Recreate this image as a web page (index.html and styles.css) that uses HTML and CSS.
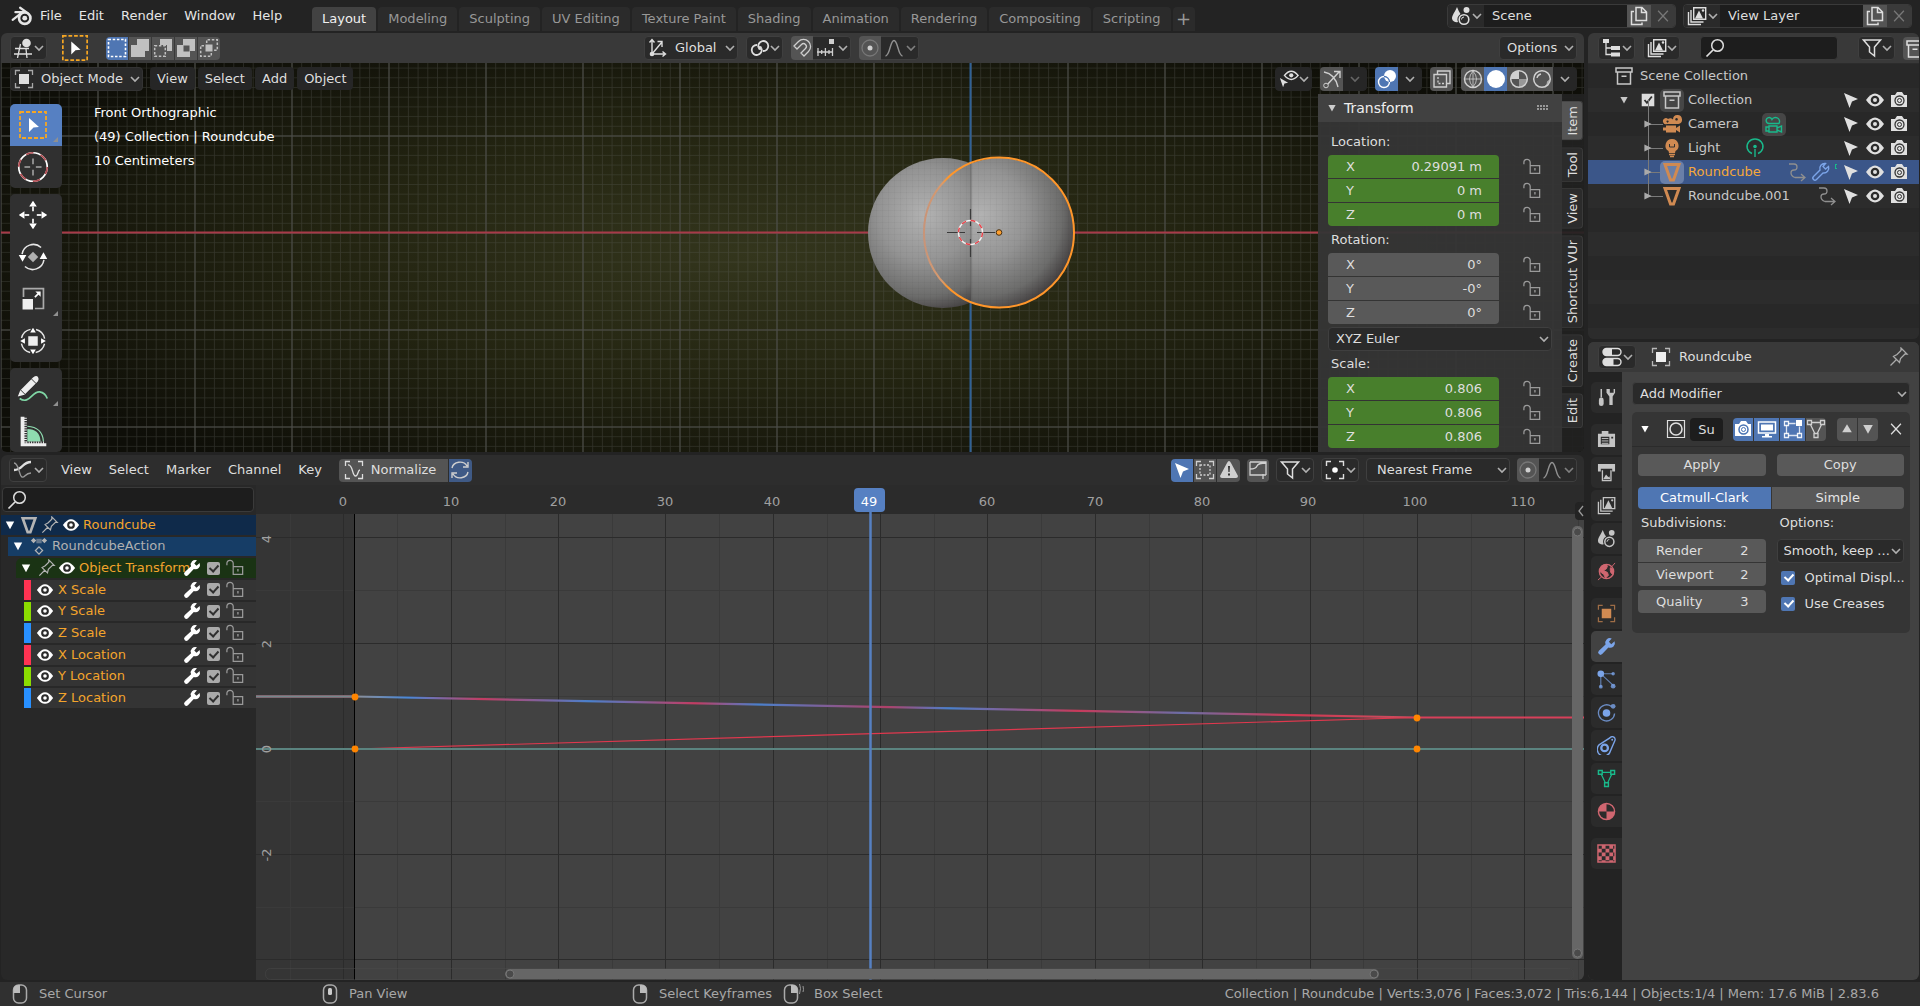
FILE: index.html
```html
<!DOCTYPE html>
<html lang="en">
<head>
<meta charset="utf-8">
<title>Blender</title>
<link rel="stylesheet" href="styles.css">
</head>
<body>
<svg class="defs" aria-hidden="true">
  <defs>
    <symbol id="chev" viewBox="0 0 10 10"><path d="M1 3l4 4 4-4" fill="none" stroke="currentColor" stroke-width="1.6"/></symbol>
    <symbol id="logo" viewBox="0 0 20 20"><path d="M8.300 2.500L15.500 7.600M1.500 13.500L10.500 6.500H4" fill="none" stroke="currentColor" stroke-width="2" stroke-linecap="round"/><circle cx="12.500" cy="12" r="5.200" fill="none" stroke="currentColor" stroke-width="2.400"/><circle cx="12.500" cy="12" r="2.200" fill="currentColor"/></symbol>
    <symbol id="arrow" viewBox="0 0 20 20"><path d="M3 3l14 6-6 2.500L8.500 18z" fill="currentColor"/></symbol>
    <symbol id="eye" viewBox="0 0 20 20"><path d="M1 10q9-13 18 0q-9 13-18 0z" fill="currentColor"/><circle cx="10" cy="10" r="4.300" fill="#2b2b2b"/><circle cx="10" cy="10" r="2" fill="currentColor"/></symbol>
    <symbol id="cam" viewBox="0 0 20 20"><path d="M2 5h4l2-3h5l2 3h3v12H2z" fill="currentColor"/><circle cx="10.500" cy="10.500" r="4.500" fill="none" stroke="#333" stroke-width="1.300"/><circle cx="10.500" cy="10.500" r="2" fill="none" stroke="#333" stroke-width="1"/></symbol>
    <symbol id="camb" viewBox="0 0 20 20"><path d="M2 5h4l2-3h5l2 3h3v12H2z" fill="currentColor"/><circle cx="10.500" cy="10.500" r="4.500" fill="none" stroke="#4772b3" stroke-width="1.500"/><circle cx="10.500" cy="10.500" r="2" fill="none" stroke="#4772b3" stroke-width="1"/></symbol>
    <symbol id="lock" viewBox="0 0 20 20"><path d="M1 7V5a3.500 3.500 0 0 1 7 0V8.500M8 8.500h10.500v8.500H8z" fill="none" stroke="currentColor" stroke-width="1.400"/><path d="M12.500 11h1.500v3h-1.500z" fill="currentColor"/></symbol>
    <symbol id="pin" viewBox="0 0 20 20"><path d="M1.500 18.500l6-6M4.500 9.500l6 6 1-4 4.500-4.500 2 0-6-6 0 2.500-4 4z" fill="none" stroke="currentColor" stroke-width="1.300"/></symbol>
    <symbol id="wrench" viewBox="0 0 20 20"><path d="M18.500 4.500l-3.500 3-2.500-2.500 3-3.500a5 5 0 0 0-6.500 6.500l-7 6.500a2.300 2.300 0 0 0 3.500 3.500l6.500-7a5 5 0 0 0 6.500-6.500z" fill="currentColor"/></symbol>
    <symbol id="wrencho" viewBox="0 0 20 20"><path d="M17.500 4.500l-3 2.500-2.500-2.500 2.500-3a5 5 0 0 0-5.500 6.500l-6.500 6.500a2 2 0 0 0 3 3l6.500-6.500a5 5 0 0 0 5.500-6.500z" fill="none" stroke="currentColor" stroke-width="1.400"/></symbol>
    <symbol id="search" viewBox="0 0 20 20"><circle cx="12.500" cy="7.500" r="5.800" fill="none" stroke="currentColor" stroke-width="1.500"/><path d="M8 12l-6.500 6.500" stroke="currentColor" stroke-width="1.700"/></symbol>
    <symbol id="funnel" viewBox="0 0 20 20"><path d="M1.500 2h17l-6 7v9l-5-4V9z" fill="none" stroke="currentColor" stroke-width="1.500"/></symbol>
    <symbol id="copy" viewBox="0 0 20 20"><path d="M7 1.500h6l4.500 4.500v8.500H7zM12.500 1.500V6.500h5M5 5.500H2.500v13H13v-2" fill="none" stroke="currentColor" stroke-width="1.500"/></symbol>
    <symbol id="x" viewBox="0 0 20 20"><path d="M3 2.500l14 15M17 2.500l-14 15" stroke="currentColor" stroke-width="1.800"/></symbol>
    <symbol id="scene" viewBox="0 0 20 20"><path d="M6 1C4 6 1 9 1 12.500a4.500 4 0 0 0 6 3.500q-2-5 2.500-8Q7.500 5 6 1z" fill="currentColor"/><circle cx="15.500" cy="4" r="3" fill="currentColor"/><circle cx="13" cy="13.500" r="4.800" fill="none" stroke="currentColor" stroke-width="1.600"/><path d="M10.500 13.500a2.500 2.500 0 0 1 2.500-2.500" fill="none" stroke="currentColor"/></symbol>
    <symbol id="layers" viewBox="0 0 20 20"><path d="M1.500 6v12.500H14M4 4v12h12.500" fill="none" stroke="currentColor" stroke-width="1.400"/><path d="M6.700 1.700h12v11.600h-12z" fill="none" stroke="currentColor" stroke-width="1.400"/><path d="M8 12.500l4-8 4 8z" fill="currentColor"/><circle cx="16" cy="4.500" r="1.200" fill="currentColor"/></symbol>
    <symbol id="ed3d" viewBox="0 0 20 20"><path d="M1 10.500h14M0 16h18M6.500 6L3.500 20M12 11l1 9" fill="none" stroke="currentColor" stroke-width="1.300"/><circle cx="12.500" cy="5" r="4.300" fill="currentColor"/></symbol>
    <symbol id="edgraph" viewBox="0 0 20 20"><path d="M1 10c9 0 8-8 17-8" fill="none" stroke="currentColor" stroke-width="2.400"/><path d="M1 3c5 0 5 13 8 14s3-4 9-4" fill="none" stroke="#999" stroke-width="1.400"/></symbol>
    <symbol id="edout" viewBox="0 0 20 20"><path d="M1 1h6v4H1zM9 8h9v4H9zM9 14.500h9v4H9z" fill="currentColor"/><path d="M4 5v11.500h5M4 10h5" fill="none" stroke="currentColor" stroke-width="1.300"/></symbol>
    <symbol id="edprop" viewBox="0 0 20 20"><rect x="1" y="1.500" width="18" height="7" rx="3.500" fill="none" stroke="currentColor" stroke-width="1.400"/><path d="M4.500 1.500H10v7H4.500a3.500 3.500 0 0 1 0-7z" fill="currentColor"/><rect x="1" y="11.500" width="18" height="7" rx="3.500" fill="none" stroke="currentColor" stroke-width="1.400"/><path d="M4.500 11.500h7v7h-7a3.500 3.500 0 0 1 0-7z" fill="currentColor"/></symbol>
    <symbol id="tsel" viewBox="0 0 30 30"><path d="M2 2h26v26H2z" fill="none" stroke="#f5a623" stroke-width="1.800" stroke-dasharray="4 2"/><path d="M11 8l10 9-5.500.5L11 22z" fill="#fff"/></symbol>
    <symbol id="m1" viewBox="0 0 20 20"><path d="M1.500 1.500h17v17h-17z" fill="none" stroke="currentColor" stroke-width="1.600" stroke-dasharray="2.500 1.700"/></symbol>
    <symbol id="m2" viewBox="0 0 20 20"><path d="M7 1h12v12h-4v6H1V7h6z" fill="currentColor"/></symbol>
    <symbol id="m3" viewBox="0 0 20 20"><path d="M7 1h12v12h-5V7H7z" fill="currentColor"/><path d="M1.700 7.700h10.600v10.600H1.700z" fill="none" stroke="currentColor" stroke-width="1.500" stroke-dasharray="2.500 1.700"/></symbol>
    <symbol id="m4" viewBox="0 0 20 20"><path fill-rule="evenodd" d="M7 1h12v12h-5v6H1V7h6zM7.500 7.500v6h6v-6z" fill="currentColor"/></symbol>
    <symbol id="m5" viewBox="0 0 20 20"><path d="M7.700 5V1.700h10.600v10.600H15M5 7.700H1.700v10.600h10.600V15" fill="none" stroke="currentColor" stroke-width="1.500" stroke-dasharray="2.500 1.700"/><path d="M6.500 6.500h7v7h-7z" fill="currentColor"/></symbol>
    <symbol id="axes" viewBox="0 0 20 20"><path d="M4 2v14h13M1.500 4.500L4 1.500l2.500 3M14.500 13.500l3 2.500-3 2.500M4 16L14 4M9.500 3.500H14V9" fill="none" stroke="currentColor" stroke-width="1.400"/><circle cx="4" cy="16" r="2.300" fill="currentColor"/></symbol>
    <symbol id="pivot" viewBox="0 0 20 20"><path d="M8.500 9.500a5 5 0 1 1 4.500 3.500M11.500 10.500a5 5 0 1 1-4.500-3.500" fill="none" stroke="currentColor" stroke-width="1.800"/><circle cx="10" cy="10" r="2" fill="currentColor"/></symbol>
    <symbol id="magnet" viewBox="0 0 20 20"><path d="M2 8l4.500-4.500a7 7 0 0 1 10 10L12 18l-3-3 4.500-4.500a2.600 2.600 0 0 0-4-4L5 11z" fill="none" stroke="currentColor" stroke-width="1.300"/></symbol>
    <symbol id="snap" viewBox="0 0 20 20"><path d="M1 14h16M2 10v8M5.700 12v4M9.400 10v8M13 12v4M16.500 10v8" stroke="currentColor" stroke-width="1.300"/><path d="M13 1h5v5h-5z" fill="currentColor"/></symbol>
    <symbol id="prop" viewBox="0 0 20 20"><circle cx="10" cy="10" r="8" fill="none" stroke="#777" stroke-width="1.300"/><circle cx="10" cy="10" r="2.500" fill="currentColor"/></symbol>
    <symbol id="bell" viewBox="0 0 20 20"><path d="M1.500 18C6 18 6 2.500 10 2.500S14 18 18.500 18" fill="none" stroke="currentColor" stroke-width="1.500"/></symbol>
    <symbol id="objmode" viewBox="0 0 20 20"><path d="M1.500 6V1.500H6M14 1.500h4.500V6M18.500 14v4.500H14M6 18.500H1.500V14" fill="none" stroke="currentColor" stroke-width="1.300" opacity=".7"/><path d="M5 5h10v10H5z" fill="currentColor"/></symbol>
    <symbol id="eyecur" viewBox="0 0 22 20"><path d="M6 6q7.500-9 15 0q-7.500 9-15 0z" fill="none" stroke="currentColor" stroke-width="1.600"/><circle cx="13.500" cy="6" r="2.300" fill="currentColor"/><path d="M1 9l9 5-4 1-1.500 4z" fill="currentColor"/></symbol>
    <symbol id="gizmo" viewBox="0 0 20 20"><path d="M2 3q11 2 14 15M4 17L17 3M12 2.500h6V9" fill="none" stroke="currentColor" stroke-width="1.400"/><circle cx="4" cy="16.500" r="2.300" fill="#545454" stroke="currentColor"/></symbol>
    <symbol id="overlay" viewBox="0 0 20 20"><circle cx="13" cy="7" r="6" fill="currentColor"/><circle cx="7" cy="13" r="5.500" fill="none" stroke="currentColor" stroke-width="1.400"/><path d="M7 7.500a5.500 5.500 0 0 1 5.500 5.500" fill="none" stroke="#4772b3" stroke-width="1.300"/></symbol>
    <symbol id="xray" viewBox="0 0 20 20"><path d="M2 5.500h12.500V18H2zM5.500 5V2H18v12.500h-3" fill="none" stroke="currentColor" stroke-width="1.400"/><path d="M6 8v6.500h6" fill="none" stroke="currentColor" stroke-width="1.300" stroke-dasharray="2 1.500"/></symbol>
    <symbol id="wire" viewBox="0 0 20 20"><path d="M10 2v16M2 10h16M10 2q-7 8 0 16M10 2q7 8 0 16" fill="none" stroke="currentColor" stroke-width=".8"/><circle cx="10" cy="10" r="8.500" fill="none" stroke="currentColor" stroke-width="1.500"/></symbol>
    <symbol id="solid" viewBox="0 0 20 20"><circle cx="10" cy="10" r="9" fill="currentColor"/></symbol>
    <symbol id="matp" viewBox="0 0 20 20"><circle cx="10" cy="10" r="8.300" fill="none" stroke="currentColor" stroke-width="1.500"/><path d="M10 1.500V10H1.500A8.500 8.500 0 0 1 10 1.500z" fill="currentColor"/><path d="M10 10h8.500A8.500 8.500 0 0 1 10 18.500z" fill="currentColor" opacity=".55"/></symbol>
    <symbol id="rend" viewBox="0 0 20 20"><circle cx="10" cy="10" r="8.300" fill="none" stroke="currentColor" stroke-width="1.500"/><path d="M18 10a8 8 0 0 1-8 8q5-1 5-5.500z" fill="currentColor" opacity=".7"/><path d="M5 9a5 5 0 0 1 4-4" fill="none" stroke="currentColor" stroke-width="1.300"/></symbol>
    <symbol id="t3cur" viewBox="0 0 40 40"><circle cx="20" cy="20" r="15" fill="none" stroke="#fff" stroke-width="1.800"/><circle cx="20" cy="20" r="15" fill="none" stroke="#b04a50" stroke-width="1.800" stroke-dasharray="7.850 7.850"/><path d="M20 11v6M20 23v6M11 20h6M23 20h6" stroke="#a8a8a8" stroke-width="1.600"/></symbol>
    <symbol id="tmove" viewBox="0 0 40 40"><path d="M20 5l4 6h-8zM20 35l4-6h-8zM5 20l6-4v8zM35 20l-6-4v8z" fill="#fff"/><path d="M20 11v5M20 24v5M11 20h5M24 20h5" stroke="#e6e6e6" stroke-width="2"/></symbol>
    <symbol id="trot" viewBox="0 0 40 40"><path d="M8.500 17a12 12 0 0 1 20-7M31.500 23a12 12 0 0 1-20 7" fill="none" stroke="#e6e6e6" stroke-width="1.600"/><path d="M9 25l-4-7h8zM31 15l-4 7h8z" fill="#fff"/><path d="M20 14.500l5.500 5.500-5.500 5.500-5.500-5.500z" fill="#b0b0b0"/></symbol>
    <symbol id="tscale" viewBox="0 0 40 40"><path d="M10 18V9h21v21h-9" fill="none" stroke="#aaa" stroke-width="1.800"/><path d="M9 20h11v11H9z" fill="#eee"/><path d="M22 18l5-5" stroke="#fff" stroke-width="1.800"/><path d="M28 12v5.500L22.500 12z" fill="#fff"/></symbol>
    <symbol id="ttrans" viewBox="0 0 40 40"><circle cx="20" cy="20" r="12.500" fill="none" stroke="#e6e6e6" stroke-width="1.500" stroke-dasharray="13.600 6" stroke-dashoffset="-3"/><path d="M15 15h10v10H15z" fill="#eee"/><path d="M20 6l3 5h-6zM20 34l3-5h-6zM6.500 20l5-3v6zM33.500 20l-5-3v6z" fill="#fff"/></symbol>
    <symbol id="tann" viewBox="0 0 40 40"><path d="M6 30c10 7 13-8 21-7q6 1 8 7" fill="none" stroke="#7fd6a4" stroke-width="1.800"/><path d="M4 28l2.500-6.500L20 8q2-2.500 4.500-1.500Q27 9 25 12L11 26z" fill="#eee"/><path d="M7 21l5 5M18.500 9.500l5 5" stroke="#303030" stroke-width="1"/></symbol>
    <symbol id="tmeas" viewBox="0 0 40 40"><path d="M14 18q13 0 14 13H14z" fill="#8fdcb0"/><path d="M14 15q16 1 17 16" fill="none" stroke="#8fdcb0" stroke-width="1.300"/><path d="M7 5h4v31H7zM7 33h27v3H7z" fill="#eee"/><path d="M12 6v28" stroke="#eee" stroke-width="3" stroke-dasharray="1 1.500"/><path d="M13 32.500h20" stroke="#eee" stroke-width="3" stroke-dasharray="1 1.500"/></symbol>
    <symbol id="norm" viewBox="0 0 20 20"><path d="M1.500 6V1.500H6M14 1.500h4.500V6M18.500 14v4.500H14M6 18.500H1.500V14M4 5c5-1 4 11 7.500 11 3 0 2-6 4.500-6" fill="none" stroke="currentColor" stroke-width="1.300"/></symbol>
    <symbol id="refresh" viewBox="0 0 20 20"><path d="M2 8a8 7 0 0 1 15-2M18 2v5h-5M18 12a8 7 0 0 1-15 2M2 18v-5h5" fill="none" stroke="currentColor" stroke-width="1.400"/></symbol>
    <symbol id="hid" viewBox="0 0 20 20"><path d="M1.500 6V1.500H6M14 1.500h4.500V6M18.500 14v4.500H14M6 18.500H1.500V14" fill="none" stroke="currentColor" stroke-width="1.300"/><path d="M5 5h10v10H5z" fill="none" stroke="currentColor" stroke-width="1.300" stroke-dasharray="2 1.500"/></symbol>
    <symbol id="warn" viewBox="0 0 20 20"><path d="M10 1q1 0 2 2l7 13q0 2-2 2H3q-2 0-2-2L8 3q1-2 2-2z" fill="currentColor"/><path d="M9 6h2l-.4 6H9.400zM9 13.500h2v2H9z" fill="#333"/></symbol>
    <symbol id="ghost" viewBox="0 0 20 20"><path d="M2 2h16v13M2 2v13h16M2 15V9q6 0 7-3t9-3M15 19v-5" fill="none" stroke="currentColor" stroke-width="1.300"/></symbol>
    <symbol id="pivg" viewBox="0 0 20 20"><path d="M1.500 6V1.500H6M14 1.500h4.500V6M18.500 14v4.500H14M6 18.500H1.500V14" fill="none" stroke="currentColor" stroke-width="1.400"/><circle cx="10" cy="10" r="2.800" fill="#fff"/></symbol>
    <symbol id="coll" viewBox="0 0 20 20"><path d="M2 2h16v4H2zM3.500 6v12h13V6" fill="none" stroke="currentColor" stroke-width="1.500"/><path d="M7.500 9.500h5v1.500h-5z" fill="currentColor"/></symbol>
    <symbol id="check" viewBox="0 0 20 20"><path d="M1 1h18v18H1z" fill="currentColor"/><path d="M5 10l3.500 4L15.500 5" fill="none" stroke="#303030" stroke-width="2.600"/></symbol>
    <symbol id="movie" viewBox="0 0 20 20"><path fill-rule="evenodd" d="M6 5a4 4 0 0 1 5 .5A4.500 4.500 0 1 1 16.500 10H5a3 3 0 1 1 1-5zM5.500 6.500a1 1 0 1 0 .1 0M14.500 4a1.300 1.300 0 1 0 .1 0M4 11.500h10v2.500l4-2.500v7l-4-2.500v2.500H4v-2H1v-3h3z" fill="currentColor"/></symbol>
    <symbol id="movieo" viewBox="0 0 20 20"><path d="M5 9.500a3 3 0 1 1 3-4A4 4 0 1 1 15 9.500zM5 12h8v6H5zM13 14l4.500-2v6L13 16M5 13H2v4h3" fill="none" stroke="currentColor" stroke-width="1.400"/></symbol>
    <symbol id="bulb" viewBox="0 0 20 20"><path d="M10 1a6.500 6.500 0 0 1 3.500 12l-.5 2H7l-.5-2A6.500 6.500 0 0 1 10 1z" fill="currentColor"/><path d="M7 16.500h6M8 18.500h4" stroke="currentColor" stroke-width="1.300" fill="none"/><path d="M7.500 6v3h5V6" stroke="#333" fill="none"/></symbol>
    <symbol id="bulbo" viewBox="0 0 20 20"><path d="M7 15.500a8 7.500 0 1 1 6 0M10 11v8" fill="none" stroke="currentColor" stroke-width="1.400"/><circle cx="10" cy="8.500" r="1.800" fill="currentColor"/></symbol>
    <symbol id="mesh" viewBox="0 0 20 20"><path d="M3 2.500h14L11.500 18h-3z" fill="none" stroke="currentColor" stroke-width="3"/></symbol>
    <symbol id="anim" viewBox="0 0 20 20"><path d="M2 2h5q3 0 3 3t-3 3-3 3 4 4.500h9M14 12l4 3.500-4 3.500" fill="none" stroke="currentColor" stroke-width="1.300"/></symbol>
    <symbol id="action" viewBox="0 0 20 20"><path d="M1 4l3-3 3 3-3 3zM13 4l3-3 3 3-3 3z" fill="currentColor"/><path d="M7 2h6v5H7z" fill="currentColor" opacity=".5"/><path d="M10 11l4 4-4 4-4-4z" fill="none" stroke="currentColor" stroke-width="1.400"/></symbol>
    <symbol id="ptool" viewBox="0 0 20 20"><path d="M4.500 1v9" stroke="currentColor" stroke-width="1.600"/><rect x="2" y="10" width="5" height="9" rx="2.500" fill="currentColor"/><path d="M10 1v4l3 4v9h3.500V9L19 5V1h-1.500v4h-4V1z" fill="currentColor"/></symbol>
    <symbol id="prender" viewBox="0 0 20 20"><path fill-rule="evenodd" d="M5 4V1h7v3h7v14H1V4zM4 7v8h9V7zM15 7v2h2V7z" fill="currentColor"/><path d="M5 9h7M5 11.500h7M5 14h7" stroke="currentColor"/></symbol>
    <symbol id="pout" viewBox="0 0 20 20"><path d="M1 1h18v8h-3V6H4v3H1z" fill="currentColor"/><path d="M5.700 7.500v11h9v-11" fill="none" stroke="currentColor" stroke-width="1.400"/><path d="M6.500 17l3-5 2.500 3 1-1 1 3z" fill="currentColor"/></symbol>
    <symbol id="pworld" viewBox="0 0 20 20"><circle cx="10" cy="10" r="7.500" fill="none" stroke="currentColor" stroke-width="1.500"/><path d="M5 4q4-2 6 0l-1 3-3 2 4 2 1 3-3 3-2-4-4-3q0-4 2-6zM14 6l3 2v5q-3-1-3-4zM1 19l4-3.500M19 1l-3.500 4" fill="currentColor" stroke="currentColor"/></symbol>
    <symbol id="ppart" viewBox="0 0 20 20"><path d="M4 4h13M4 4v14M4 4l14 13" stroke="currentColor" stroke-width="1.200" opacity=".7"/><circle cx="4" cy="4" r="3.500" fill="currentColor"/><circle cx="17" cy="4" r="1.800" fill="currentColor" opacity=".8"/><circle cx="4" cy="17.500" r="2" fill="currentColor" opacity=".8"/><circle cx="17" cy="17" r="2.500" fill="currentColor" opacity=".8"/></symbol>
    <symbol id="pphys" viewBox="0 0 20 20"><path d="M15 3.500A8.500 8.500 0 1 0 18.500 11" fill="none" stroke="currentColor" stroke-width="1.400" opacity=".8"/><circle cx="10" cy="10.500" r="4" fill="currentColor"/><circle cx="17" cy="3.500" r="2.500" fill="currentColor" opacity=".8"/></symbol>
    <symbol id="pcons" viewBox="0 0 20 20"><path d="M2.500 9L13.500 2a3 3 0 0 1 5 3.500L14 16a7 7 0 1 1-11.500-7z" fill="none" stroke="currentColor" stroke-width="1.500"/><circle cx="8" cy="12.500" r="3.500" fill="none" stroke="currentColor" stroke-width="2.400"/><circle cx="16" cy="4" r="1" fill="currentColor"/></symbol>
    <symbol id="pmesh" viewBox="0 0 20 20"><path d="M3.500 3.500h13L10 17z" fill="none" stroke="currentColor" stroke-width="1.300"/><path d="M1.500 1.500h4v4h-4zM14.500 1.500h4v4h-4zM8 14.500h4v4H8z" fill="#2b2b2b" stroke="currentColor" stroke-width="1.500"/></symbol>
    <symbol id="meshed" viewBox="0 0 20 20"><path d="M3.500 3.500h13L10 17z" fill="none" stroke="currentColor" stroke-width="1.300"/><path d="M1.500 1.500h4v4h-4zM14.500 1.500h4v4h-4zM8 14.500h4v4H8z" fill="#545454" stroke="currentColor" stroke-width="1.300"/></symbol>
    <symbol id="pmat" viewBox="0 0 20 20"><circle cx="10" cy="10" r="8.500" fill="none" stroke="currentColor" stroke-width="1.500"/><path d="M10 1.500V10H1.500a8.500 8.500 0 0 1 8.500-8.500zM10 10h8.500a8.500 8.500 0 0 1-8.500 8.500z" fill="currentColor"/></symbol>
    <symbol id="ptex" viewBox="0 0 20 20"><path d="M1 1h18v18H1z" fill="none" stroke="currentColor" stroke-width="1.500"/><path d="M5 1h4v4H5zM13 1h4v4h-4zM1 5h4v4H1zM9 5h4v4H9zM17 5h2v4h-2zM5 9h4v4H5zM13 9h4v4h-4zM1 13h4v4H1zM9 13h4v4H9zM17 13h2v4h-2zM5 17h4v2H5zM13 17h4v2h-4z" fill="currentColor"/></symbol>
    <symbol id="subsurf" viewBox="0 0 20 20"><path d="M1.500 1.500h17v17h-17z" fill="none" stroke="currentColor" stroke-width="1.200"/><circle cx="10" cy="10" r="6" fill="none" stroke="currentColor" stroke-width="1.600"/></symbol>
    <symbol id="monitor" viewBox="0 0 20 20"><path d="M1.500 3h17v11h-17z" fill="none" stroke="currentColor" stroke-width="1.500"/><path d="M4 5.500h12v6H4zM8 15h4v2.500H8zM5 17h10v1.500H5z" fill="currentColor"/></symbol>
    <symbol id="editm" viewBox="0 0 20 20"><path d="M3.500 16.500v-12h9M3.500 16.500h13v-9" fill="none" stroke="currentColor" stroke-width="1.300" opacity=".8"/><path d="M1.500 2.500h4v4h-4zM1.500 14.500h4v4h-4zM14.500 14.500h4v4h-4z" fill="#4772b3" stroke="currentColor" stroke-width="1.300" opacity=".9"/><path d="M13 1h6v6h-6z" fill="#fff"/></symbol>
    <symbol id="up" viewBox="0 0 20 20"><path d="M10 4l6 10H4z" fill="currentColor"/></symbol>
    <symbol id="down" viewBox="0 0 20 20"><path d="M10 16l6-11H4z" fill="currentColor"/></symbol>
    <symbol id="right" viewBox="0 0 20 20"><path d="M16 10L4 4v12z" fill="currentColor"/></symbol>
    <symbol id="ml" viewBox="0 0 20 20"><rect x="3.500" y="1" width="13" height="18" rx="5" fill="none" stroke="#aaa" stroke-width="1.500"/><path d="M3.500 9V6q0-5 5-5h1.500v8z" fill="#bbb"/></symbol>
    <symbol id="mm" viewBox="0 0 20 20"><rect x="3.500" y="1" width="13" height="18" rx="5" fill="none" stroke="#aaa" stroke-width="1.500"/><rect x="8" y="4" width="4" height="7" rx="1.500" fill="#ccc"/></symbol>
    <symbol id="mr" viewBox="0 0 20 20"><rect x="3.500" y="1" width="13" height="18" rx="5" fill="none" stroke="#aaa" stroke-width="1.500"/><path d="M16.500 9V6q0-5-5-5H10v8z" fill="#bbb"/></symbol>
    <symbol id="mrd" viewBox="0 0 24 20"><rect x="3.500" y="1" width="13" height="18" rx="5" fill="none" stroke="#aaa" stroke-width="1.500"/><path d="M16.500 9V6q0-5-5-5H10v8z" fill="#bbb"/><path d="M18.500 0q2 4 0 10M22 2q1 4 0 6" fill="none" stroke="#999"/></symbol>
  </defs>
</svg>

<header class="topbar">
  <nav class="menus">
    <svg class="ic logo"><use href="#logo"/></svg>
    <button>File</button><button>Edit</button><button>Render</button><button>Window</button><button>Help</button>
  </nav>
  <nav class="tabs">
    <button class="on">Layout</button><button>Modeling</button><button>Sculpting</button><button>UV Editing</button><button>Texture Paint</button><button>Shading</button><button>Animation</button><button>Rendering</button><button>Compositing</button><button>Scripting</button><button class="plus" aria-label="Add workspace">+</button>
  </nav>
  <div class="ids">
    <div class="idblock">
      <button class="drop" aria-label="Browse scene"><svg class="ic"><use href="#scene"/></svg><svg class="ch"><use href="#chev"/></svg></button>
      <input type="text" value="Scene" aria-label="Scene name">
      <button class="new" aria-label="New scene"><svg class="ic"><use href="#copy"/></svg></button>
      <button class="del" aria-label="Delete scene"><svg class="sm"><use href="#x"/></svg></button>
    </div>
    <div class="idblock">
      <button class="drop" aria-label="Browse view layer"><svg class="ic"><use href="#layers"/></svg><svg class="ch"><use href="#chev"/></svg></button>
      <input type="text" value="View Layer" aria-label="View layer name">
      <button class="new" aria-label="New view layer"><svg class="ic"><use href="#copy"/></svg></button>
      <button class="del" aria-label="Delete view layer"><svg class="sm"><use href="#x"/></svg></button>
    </div>
  </div>
</header>

<main class="screen">
  <div class="left">
    <section class="editor view3d">
      <div class="hdr toolhdr">
        <div class="grp">
          <button class="drop ed" aria-label="Editor type"><svg class="ic"><use href="#ed3d"/></svg><svg class="ch"><use href="#chev"/></svg></button>
          <svg class="tool"><use href="#tsel"/></svg>
          <div class="seg modes">
            <button class="on" aria-label="Set"><svg class="ic"><use href="#m1"/></svg></button><button aria-label="Extend"><svg class="ic"><use href="#m2"/></svg></button><button aria-label="Subtract"><svg class="ic"><use href="#m3"/></svg></button><button aria-label="Invert"><svg class="ic"><use href="#m4"/></svg></button><button aria-label="Intersect"><svg class="ic"><use href="#m5"/></svg></button>
          </div>
        </div>
        <div class="grp mid">
          <label class="sel global"><svg class="ic"><use href="#axes"/></svg><select aria-label="Orientation"><option>Global</option></select><svg class="ch"><use href="#chev"/></svg></label>
          <button class="drop" aria-label="Pivot point"><svg class="ic"><use href="#pivot"/></svg><svg class="ch"><use href="#chev"/></svg></button>
          <div class="seg combo"><button aria-label="Snap"><svg class="ic"><use href="#magnet"/></svg></button><button class="drop" aria-label="Snap to"><svg class="ic"><use href="#snap"/></svg><svg class="ch"><use href="#chev"/></svg></button></div>
          <div class="seg combo"><button aria-label="Proportional editing"><svg class="ic"><use href="#prop"/></svg></button><button class="drop dim" aria-label="Falloff"><svg class="ic"><use href="#bell"/></svg><svg class="ch"><use href="#chev"/></svg></button></div>
        </div>
        <div class="grp end"><button class="drop options">Options<svg class="ch"><use href="#chev"/></svg></button></div>
      </div>
      <div class="canvas">
        <svg class="scene" viewBox="1 63 1583 389" preserveAspectRatio="xMidYMid slice">
          <defs>
            <radialGradient id="bg" gradientUnits="userSpaceOnUse" cx="0" cy="0" r="1" gradientTransform="translate(760 255) scale(860 260)">
              <stop offset="0" stop-color="#34361d"/><stop offset=".5" stop-color="#232411"/><stop offset="1" stop-color="#0e0e08"/>
            </radialGradient>
            <pattern id="minor" patternUnits="userSpaceOnUse" x="970.500" y="232.500" width="9.700" height="9.700"><path d="M0 0H9.700M0 0V9.700" stroke="#5a5b57" stroke-opacity=".38" stroke-width="1.600"/></pattern>
            <pattern id="major" patternUnits="userSpaceOnUse" x="970.500" y="232.500" width="97" height="97"><path d="M0 0H97M0 0V97" stroke="#4e4f4b" stroke-width="2"/></pattern>
            <radialGradient id="ball" cx=".38" cy=".38" r=".68"><stop offset="0" stop-color="#b2b2b2"/><stop offset=".45" stop-color="#949494"/><stop offset=".8" stop-color="#6c6c6b"/><stop offset="1" stop-color="#3c3839"/></radialGradient>
            <linearGradient id="sel" x1="0" x2="1" y1="0" y2="0"><stop offset="0" stop-color="#c89478"/><stop offset=".12" stop-color="#d89a6c"/><stop offset=".16" stop-color="#ff962a"/><stop offset="1" stop-color="#ff962a"/></linearGradient>
            <clipPath id="lh"><path d="M860 150h111v170H860z"/></clipPath>
            <clipPath id="rh"><path d="M971 150h111v170H971z"/></clipPath>
            <pattern id="facet" patternUnits="userSpaceOnUse" width="6" height="6"><path d="M0 0H6M0 0V6" stroke="#000" stroke-opacity=".05"/></pattern>
          </defs>
          <path d="M1 63h1583v389H1z" fill="url(#bg)"/>
          <path d="M1 63h1583v389H1z" fill="url(#minor)"/>
          <path d="M1 63h1583v389H1z" fill="url(#major)"/>
          <path d="M1 232.500h1583" stroke="#a83a48" stroke-width="2"/>
          <path d="M970.500 63v389" stroke="#2f6196" stroke-width="2"/>
          <g clip-path="url(#lh)"><circle cx="943" cy="233" r="75" fill="url(#ball)"/><circle cx="943" cy="233" r="75" fill="url(#facet)"/></g>
          <g clip-path="url(#rh)"><circle cx="999" cy="233" r="75" fill="url(#ball)"/><circle cx="999" cy="233" r="75" fill="url(#facet)"/></g>
          <path d="M971 163v139" stroke="#555" stroke-opacity=".6"/>
          <circle cx="999" cy="232.500" r="75" fill="none" stroke="url(#sel)" stroke-width="2"/>
          <path d="M947 232.500h18M977 232.500h18M970.500 209v17M970.500 239v18" stroke="#3a3a3a" stroke-width="1.200"/>
          <circle cx="970.500" cy="232.500" r="12" fill="none" stroke="#f2f2f2" stroke-width="1.500"/>
          <circle cx="970.500" cy="232.500" r="12" fill="none" stroke="#e8434a" stroke-width="1.500" stroke-dasharray="4.700 4.700"/>
          <circle cx="999" cy="232.500" r="2.800" fill="#ffa02f" stroke="#4a3010"/>
        </svg>
        <div class="over">
          <div class="ovhdr">
            <label class="sel mode"><svg class="ic"><use href="#objmode"/></svg><select aria-label="Mode"><option>Object Mode</option></select><svg class="ch"><use href="#chev"/></svg></label>
            <div class="ovmenu"><button>View</button><button>Select</button><button>Add</button><button>Object</button></div>
            <div class="ovright">
              <button class="drop" aria-label="Object visibility"><svg class="ic"><use href="#eyecur"/></svg><svg class="ch"><use href="#chev"/></svg></button>
              <div class="seg combo nar dimc"><button aria-label="Gizmos"><svg class="ic"><use href="#gizmo"/></svg></button><button class="drop" aria-label="Gizmo options"><svg class="ch"><use href="#chev"/></svg></button></div>
              <div class="seg combo nar"><button class="on" aria-label="Overlays"><svg class="ic"><use href="#overlay"/></svg></button><button class="drop" aria-label="Overlay options"><svg class="ch"><use href="#chev"/></svg></button></div>
              <div class="seg combo nar"><button aria-label="X-ray"><svg class="ic"><use href="#xray"/></svg></button></div>
              <div class="seg combo nar shade"><button aria-label="Wireframe"><svg class="ic"><use href="#wire"/></svg></button><button class="on" aria-label="Solid"><svg class="ic"><use href="#solid"/></svg></button><button aria-label="Material preview"><svg class="ic"><use href="#matp"/></svg></button><button aria-label="Rendered"><svg class="ic"><use href="#rend"/></svg></button><button class="drop" aria-label="Shading options"><svg class="ch"><use href="#chev"/></svg></button></div>
            </div>
          </div>
          <div class="ovbody">
            <div class="shelf">
              <div class="tg"><button class="on more" aria-label="Select Box"><svg class="t30"><use href="#tsel"/></svg></button><button aria-label="Cursor"><svg><use href="#t3cur"/></svg></button></div>
              <div class="tg"><button aria-label="Move"><svg><use href="#tmove"/></svg></button><button aria-label="Rotate"><svg><use href="#trot"/></svg></button><button class="more" aria-label="Scale"><svg><use href="#tscale"/></svg></button><button aria-label="Transform"><svg><use href="#ttrans"/></svg></button></div>
              <div class="tg"><button class="more" aria-label="Annotate"><svg><use href="#tann"/></svg></button><button aria-label="Measure"><svg><use href="#tmeas"/></svg></button></div>
            </div>
            <div class="info"><p>Front Orthographic</p><p>(49) Collection | Roundcube</p><p>10 Centimeters</p></div>
            <aside class="npanel">
              <h2><svg class="tri"><use href="#down"/></svg>Transform<span class="grip"></span></h2>
              <div class="nbody">
                <p>Location:</p>
                <div class="xyz"><div class="fields green"><label>X<input value="0.29091 m"></label><label>Y<input value="0 m"></label><label>Z<input value="0 m"></label></div><div class="locks"><svg><use href="#lock"/></svg><svg><use href="#lock"/></svg><svg><use href="#lock"/></svg></div></div>
                <p>Rotation:</p>
                <div class="xyz"><div class="fields"><label>X<input value="0°"></label><label>Y<input value="-0°"></label><label>Z<input value="0°"></label></div><div class="locks"><svg><use href="#lock"/></svg><svg><use href="#lock"/></svg><svg><use href="#lock"/></svg></div></div>
                <label class="sel euler"><select aria-label="Rotation mode"><option>XYZ Euler</option></select><svg class="ch"><use href="#chev"/></svg></label>
                <p class="scl">Scale:</p>
                <div class="xyz"><div class="fields green"><label>X<input value="0.806"></label><label>Y<input value="0.806"></label><label>Z<input value="0.806"></label></div><div class="locks"><svg><use href="#lock"/></svg><svg><use href="#lock"/></svg><svg><use href="#lock"/></svg></div></div>
              </div>
            </aside>
            <nav class="vtabs"><button class="on">Item</button><button>Tool</button><button>View</button><button>Shortcut VUr</button><button>Create</button><button>Edit</button></nav>
          </div>
        </div>
      </div>
    </section>

    <section class="editor graph">
      <div class="hdr ghdr">
        <button class="drop gd" aria-label="Editor type"><svg class="ic"><use href="#edgraph"/></svg><svg class="ch"><use href="#chev"/></svg></button>
        <nav class="gmenu"><button>View</button><button>Select</button><button>Marker</button><button>Channel</button><button>Key</button></nav>
        <div class="seg norm"><button class="nb"><svg class="ic"><use href="#norm"/></svg>Normalize</button><button class="rf" aria-label="Auto normalize"><svg class="ic"><use href="#refresh"/></svg></button></div>
        <div class="gright">
          <div class="seg"><button class="on" aria-label="Only selected"><svg class="ic"><use href="#arrow"/></svg></button><button aria-label="Show hidden"><svg class="ic"><use href="#hid"/></svg></button><button class="lit" aria-label="Only errors"><svg class="ic"><use href="#warn"/></svg></button></div>
          <div class="seg"><button aria-label="Ghost curves"><svg class="ic"><use href="#ghost"/></svg></button></div>
          <button class="drop gd" aria-label="Filters"><svg class="ic"><use href="#funnel"/></svg><svg class="ch"><use href="#chev"/></svg></button>
          <button class="drop gd" aria-label="Pivot"><svg class="ic"><use href="#pivg"/></svg><svg class="ch"><use href="#chev"/></svg></button>
          <label class="sel nearest"><select aria-label="Auto snap"><option>Nearest Frame</option></select><svg class="ch"><use href="#chev"/></svg></label>
          <div class="seg combo"><button aria-label="Proportional editing"><svg class="ic"><use href="#prop"/></svg></button><button class="drop dim" aria-label="Falloff"><svg class="ic"><use href="#bell"/></svg><svg class="ch"><use href="#chev"/></svg></button></div>
        </div>
      </div>
      <div class="gbody">
        <div class="channels">
          <label class="find"><svg class="ic"><use href="#search"/></svg><input type="search" aria-label="Filter channels"></label>
          <ul class="chans">
            <li class="obj"><svg class="tri"><use href="#down"/></svg><svg class="ic grey"><use href="#mesh"/></svg><svg class="ic grey"><use href="#pin"/></svg><svg class="ic"><use href="#eye"/></svg><span>Roundcube</span></li>
            <li class="act"><svg class="tri"><use href="#down"/></svg><svg class="ic grey"><use href="#action"/></svg><span class="plain">RoundcubeAction</span></li>
            <li class="grpc"><svg class="tri"><use href="#down"/></svg><svg class="ic grey"><use href="#pin"/></svg><svg class="ic"><use href="#eye"/></svg><span>Object Transform</span><svg class="ic r"><use href="#wrench"/></svg><input type="checkbox" checked aria-label="Enable Object Transforms"><svg class="lk"><use href="#lock"/></svg></li>
            <li class="fc red"><svg class="ic"><use href="#eye"/></svg><span>X Scale</span><svg class="ic r"><use href="#wrench"/></svg><input type="checkbox" checked aria-label="Enable X Scale"><svg class="lk"><use href="#lock"/></svg></li>
            <li class="fc grn"><svg class="ic"><use href="#eye"/></svg><span>Y Scale</span><svg class="ic r"><use href="#wrench"/></svg><input type="checkbox" checked aria-label="Enable Y Scale"><svg class="lk"><use href="#lock"/></svg></li>
            <li class="fc blu"><svg class="ic"><use href="#eye"/></svg><span>Z Scale</span><svg class="ic r"><use href="#wrench"/></svg><input type="checkbox" checked aria-label="Enable Z Scale"><svg class="lk"><use href="#lock"/></svg></li>
            <li class="fc red"><svg class="ic"><use href="#eye"/></svg><span>X Location</span><svg class="ic r"><use href="#wrench"/></svg><input type="checkbox" checked aria-label="Enable X Location"><svg class="lk"><use href="#lock"/></svg></li>
            <li class="fc grn"><svg class="ic"><use href="#eye"/></svg><span>Y Location</span><svg class="ic r"><use href="#wrench"/></svg><input type="checkbox" checked aria-label="Enable Y Location"><svg class="lk"><use href="#lock"/></svg></li>
            <li class="fc blu"><svg class="ic"><use href="#eye"/></svg><span>Z Location</span><svg class="ic r"><use href="#wrench"/></svg><input type="checkbox" checked aria-label="Enable Z Location"><svg class="lk"><use href="#lock"/></svg></li>
          </ul>
        </div>
        <svg class="plot" viewBox="256 485 1328 495" preserveAspectRatio="xMinYMin slice">
          <defs>
            <linearGradient id="mix" gradientUnits="userSpaceOnUse" x1="355" y1="0" x2="1417" y2="0"><stop offset="0" stop-color="#8d8f96"/><stop offset=".05" stop-color="#4a88d8"/><stop offset=".12" stop-color="#c23c62"/><stop offset=".22" stop-color="#4a80cc"/><stop offset=".32" stop-color="#c23c62"/><stop offset=".38" stop-color="#4a80cc"/><stop offset=".5" stop-color="#b04068"/><stop offset=".56" stop-color="#4a80cc"/><stop offset=".68" stop-color="#c83a5a"/><stop offset=".78" stop-color="#6a6fa8"/><stop offset=".88" stop-color="#d03852"/><stop offset="1" stop-color="#c85060"/></linearGradient>
          </defs>
          <path d="M256 514h1328v466H256z" fill="#424242"/>
          <path d="M256 514h98.500v466H256z" fill="#353535"/>
          <path d="M290.500 514v466M397.500 514v466M505.500 514v466M612.500 514v466M719.500 514v466M827.500 514v466M934.500 514v466M1041.500 514v466M1149.500 514v466M1256.500 514v466M1363.500 514v466M1471.500 514v466M1578.500 514v466M256 590.500h1328M256 696.500h1328M256 801.500h1328M256 907.500h1328" stroke="#3a3a3a"/>
          <path d="M343.500 514v466M451.500 514v466M558.500 514v466M665.500 514v466M773.500 514v466M880.500 514v466M987.500 514v466M1095.500 514v466M1202.500 514v466M1310.500 514v466M1417.500 514v466M1524.500 514v466M256 537.500h1328M256 643.500h1328M256 749.500h1328M256 854.500h1328M256 959.500h1328" stroke="#2b2b2b"/>
          <path d="M354.500 514v466" stroke="#000"/>
          <path d="M256 696.500h98.500" stroke="#8a4a58" stroke-width="3"/><path d="M256 696.500h98.500" stroke="#74888c" stroke-width="2"/>
          <path d="M354.500 696.500L1417 717.500" stroke="url(#mix)" stroke-width="2.200"/>
          <path d="M1417 717.500h167" stroke="#d8405a" stroke-width="2"/>
          <path d="M354.500 749L1417 717.500" stroke="#e0384e" stroke-width="1.100"/>
          <path d="M256 749h1328" stroke="#5b8480" stroke-width="1.800"/>
          <path d="M256 485h1328v29H256z" fill="#2b2b2b"/>
          <path d="M870.500 498v482" stroke="#5680c2" stroke-width="2.500"/>
          <rect x="854" y="488" width="31" height="24" rx="4" fill="#5680c2"/>
          <g fill="#ff8500"><circle cx="355" cy="697" r="3.400"/><circle cx="355" cy="749" r="3.400"/><circle cx="1417" cy="718" r="3.400"/><circle cx="1417" cy="749" r="3.400"/></g>
          <rect x="265.500" y="968.500" width="1308" height="11" rx="5" fill="none" stroke="#4a4a4a" stroke-opacity=".5"/>
          <rect x="505" y="969" width="874" height="10" rx="5" fill="#666"/><circle cx="510" cy="974" r="4" fill="#4a4a4a" stroke="#777"/><circle cx="1374" cy="974" r="4" fill="#4a4a4a" stroke="#777"/>
          <rect x="1572" y="526" width="11" height="433" rx="5" fill="#666"/><circle cx="1577.500" cy="532" r="4" fill="#4a4a4a" stroke="#777"/><circle cx="1577.500" cy="953" r="4" fill="#4a4a4a" stroke="#777"/>
          <path d="M1584 502v18h-5q-4 0-4-4v-10q0-4 4-4z" fill="#232323"/><path d="M1583 506l-4 5 4 5" fill="none" stroke="#999" stroke-width="1.300"/>
          <g class="axis"><text x="343" y="506">0</text><text x="451" y="506">10</text><text x="558" y="506">20</text><text x="665" y="506">30</text><text x="772" y="506">40</text><text x="987" y="506">60</text><text x="1095" y="506">70</text><text x="1202" y="506">80</text><text x="1308" y="506">90</text><text x="1415" y="506">100</text><text x="1523" y="506">110</text><text class="cur" x="869" y="506">49</text>
          <text transform="translate(271 539) rotate(-90)">4</text><text transform="translate(271 644) rotate(-90)">2</text><text transform="translate(271 749) rotate(-90)">0</text><text transform="translate(271 855) rotate(-90)">-2</text></g>
        </svg>
      </div>
    </section>
  </div>

  <div class="right">
    <section class="editor outliner">
      <div class="hdr ohdr">
        <button class="drop" aria-label="Editor type"><svg class="ic"><use href="#edout"/></svg><svg class="ch"><use href="#chev"/></svg></button>
        <button class="drop" aria-label="Display mode"><svg class="ic"><use href="#layers"/></svg><svg class="ch"><use href="#chev"/></svg></button>
        <label class="find"><svg class="ic"><use href="#search"/></svg><input type="search" aria-label="Filter outliner"></label>
        <button class="drop flt" aria-label="Filter"><svg class="ic"><use href="#funnel"/></svg><svg class="ch"><use href="#chev"/></svg></button>
        <button class="newcol" aria-label="New collection"><svg class="ic"><use href="#coll"/></svg></button>
      </div>
      <ul class="tree">
        <li class="root"><svg class="ic"><use href="#coll"/></svg><span>Scene Collection</span></li>
        <li class="col"><svg class="tri"><use href="#down"/></svg><svg class="cb"><use href="#check"/></svg><i class="pad"><svg class="ic"><use href="#coll"/></svg></i><span>Collection</span><div class="acts"><svg class="ic"><use href="#arrow"/></svg><svg class="ic"><use href="#eye"/></svg><svg class="ic"><use href="#cam"/></svg></div></li>
        <li class="ob"><svg class="tri"><use href="#right"/></svg><i><svg class="ic or"><use href="#movie"/></svg></i><span>Camera</span><i class="pad d1"><svg class="ic gr"><use href="#movieo"/></svg></i><div class="acts"><svg class="ic"><use href="#arrow"/></svg><svg class="ic"><use href="#eye"/></svg><svg class="ic"><use href="#cam"/></svg></div></li>
        <li class="ob"><svg class="tri"><use href="#right"/></svg><i><svg class="ic or"><use href="#bulb"/></svg></i><span>Light</span><i class="d1"><svg class="ic gr"><use href="#bulbo"/></svg></i><div class="acts"><svg class="ic"><use href="#arrow"/></svg><svg class="ic"><use href="#eye"/></svg><svg class="ic"><use href="#cam"/></svg></div></li>
        <li class="ob active"><svg class="tri"><use href="#right"/></svg><i class="pad"><svg class="ic or"><use href="#mesh"/></svg></i><span>Roundcube</span><div class="acts"><svg class="ic dimi"><use href="#anim"/></svg><svg class="ic bl"><use href="#wrencho"/></svg><b></b><svg class="ic"><use href="#arrow"/></svg><svg class="ic"><use href="#eye"/></svg><svg class="ic"><use href="#cam"/></svg></div></li>
        <li class="ob"><svg class="tri"><use href="#right"/></svg><i><svg class="ic or"><use href="#mesh"/></svg></i><span>Roundcube.001</span><div class="acts"><svg class="ic dimi"><use href="#anim"/></svg><svg class="ic"><use href="#arrow"/></svg><svg class="ic"><use href="#eye"/></svg><svg class="ic"><use href="#cam"/></svg></div></li>
      </ul>
    </section>

    <section class="editor props">
      <div class="hdr phdr">
        <button class="drop gd" aria-label="Editor type"><svg class="ic"><use href="#edprop"/></svg><svg class="ch"><use href="#chev"/></svg></button>
        <svg class="ic oi"><use href="#objmode"/></svg><span>Roundcube</span><svg class="ic pinr"><use href="#pin"/></svg>
      </div>
      <div class="pbody">
        <nav class="ptabs">
          <button aria-label="Tool"><svg><use href="#ptool"/></svg></button>
          <button class="first" aria-label="Render"><svg><use href="#prender"/></svg></button>
          <button aria-label="Output"><svg><use href="#pout"/></svg></button>
          <button aria-label="View layer"><svg><use href="#layers"/></svg></button>
          <button aria-label="Scene"><svg><use href="#scene"/></svg></button>
          <button class="pk" aria-label="World"><svg><use href="#pworld"/></svg></button>
          <button class="first or" aria-label="Object"><svg><use href="#objmode"/></svg></button>
          <button class="on bl" aria-label="Modifiers"><svg><use href="#wrench"/></svg></button>
          <button class="bl" aria-label="Particles"><svg><use href="#ppart"/></svg></button>
          <button class="bl" aria-label="Physics"><svg><use href="#pphys"/></svg></button>
          <button class="bl" aria-label="Constraints"><svg><use href="#pcons"/></svg></button>
          <button class="gr" aria-label="Object data"><svg><use href="#pmesh"/></svg></button>
          <button class="pk" aria-label="Material"><svg><use href="#pmat"/></svg></button>
          <button class="first pk" aria-label="Texture"><svg><use href="#ptex"/></svg></button>
        </nav>
        <div class="pcont">
          <label class="sel add"><select aria-label="Add modifier"><option>Add Modifier</option></select><svg class="ch"><use href="#chev"/></svg></label>
          <div class="mod">
            <div class="mhead">
              <svg class="tri"><use href="#down"/></svg><svg class="ic sub"><use href="#subsurf"/></svg>
              <input type="text" value="Su" aria-label="Modifier name">
              <div class="seg mseg"><button class="on" aria-label="Render"><svg class="ic"><use href="#camb"/></svg></button><button class="on w" aria-label="Realtime"><svg class="ic"><use href="#monitor"/></svg></button><button class="on w" aria-label="Edit mode"><svg class="ic"><use href="#editm"/></svg></button><button aria-label="On cage"><svg class="ic"><use href="#meshed"/></svg></button></div>
              <div class="seg ud"><button aria-label="Move up"><svg class="ic"><use href="#up"/></svg></button><button aria-label="Move down"><svg class="ic"><use href="#down"/></svg></button></div>
              <button class="mx" aria-label="Remove modifier"><svg class="sm"><use href="#x"/></svg></button>
            </div>
            <div class="mbody">
              <div class="two"><button class="pb">Apply</button><button class="pb">Copy</button></div>
              <div class="seg alg"><button class="on">Catmull-Clark</button><button>Simple</button></div>
              <div class="two opts">
                <div>
                  <p>Subdivisions:</p>
                  <div class="fields"><label>Render<input value="2"></label><label>Viewport<input value="2"></label></div>
                  <div class="fields q"><label>Quality<input value="3"></label></div>
                </div>
                <div>
                  <p>Options:</p>
                  <label class="sel uv"><select aria-label="UV smooth"><option>Smooth, keep ...</option></select><svg class="ch"><use href="#chev"/></svg></label>
                  <label class="ck"><input type="checkbox" checked>Optimal Displ...</label>
                  <label class="ck"><input type="checkbox" checked>Use Creases</label>
                </div>
              </div>
            </div>
          </div>
        </div>
      </div>
    </section>
  </div>
</main>

<footer class="status">
  <span class="s1"><svg><use href="#ml"/></svg>Set Cursor</span>
  <span class="s1"><svg><use href="#mm"/></svg>Pan View</span>
  <span class="s2"><svg><use href="#mr"/></svg>Select Keyframes</span>
  <span><svg class="wd"><use href="#mrd"/></svg>Box Select</span>
  <span class="stats">Collection | Roundcube | Verts:3,076 | Faces:3,072 | Tris:6,144 | Objects:1/4 | Mem: 17.6 MiB | 2.83.6</span>
</footer>
</body>
</html>
```
FILE: styles.css
```css
* { box-sizing: border-box; }
body {
  margin: 0; height: 100vh; overflow: hidden;
  display: grid; grid-template-rows: 33px 1fr 24px; row-gap: 0;
  background: #232323; color: #dedede;
  font: 13px/16px "DejaVu Sans", sans-serif;
}
.defs { position: absolute; width: 0; height: 0; }
button, input, select { font: inherit; color: inherit; margin: 0; padding: 0; border: 0; background: none; min-width: 0; border-radius: 0; }
input, select { outline: 0; appearance: none; }
p, ul, h2 { margin: 0; padding: 0; list-style: none; font: inherit; }
svg { display: block; flex: none; }
.ic { width: 20px; height: 20px; }
.sm { width: 14px; height: 14px; }
.ch { width: 10px; height: 10px; color: #b0b0b0; }
.tri { width: 12px; height: 12px; }
.or { color: #d08a52; }
.gr { color: #19b98b; }
.bl { color: #7ba4e8; }
.pk { color: #cf6670; }

/* buttons, drop-downs, segmented groups */
.drop, .sel {
  display: flex; align-items: center; justify-content: space-between;
  height: 24px; width: 37px; padding: 0 2px 0 3px;
  background: #2a2a2a; border: 1px solid #3f3f3f; border-radius: 4px;
}
.sel select { flex: 1; padding-left: 7px; }
.dim { color: #909090; }
.dim .ch { color: #808080; }
.seg { display: flex; gap: 1px; height: 23px; border-radius: 4px; overflow: hidden; }
.seg > button { display: flex; align-items: center; justify-content: center; width: 22px; height: 23px; background: #545454; color: #cfcfcf; }
.seg > .on { background: #4f76b3; color: #fff; }
.combo { height: 24px; gap: 0; }
.combo > button { height: 24px; }
.combo > .drop { width: 38px; background: #2a2a2a; border-radius: 0 4px 4px 0; justify-content: space-between; border-left: 0; }
.combo > .dim { color: #909090; }
.nar > button { width: 23px; }
.nar > .drop { width: 24px; justify-content: center; }
.dimc { color: #999; }
.dimc .ch { color: #666; }

/* top bar */
.topbar { display: flex; align-items: flex-start; }
.menus { display: flex; align-items: center; width: 312px; height: 31px; padding-left: 11px; gap: 17px; color: #e6e6e6; }
.menus .logo { width: 22px; height: 22px; margin-right: -10px; }
.tabs { display: flex; gap: 2px; padding-top: 7px; }
.tabs button { height: 24px; padding: 0 10px; border-radius: 4px 4px 0 0; background: #2b2b2b; color: #989898; }
.tabs .on { background: #424242; color: #f0f0f0; }
.tabs .plus { width: 22px; padding: 0; font-size: 18px; }
.ids { display: flex; gap: 7px; margin-left: auto; padding: 4px 8px 0 0; }
.idblock { display: flex; height: 24px; border: 1px solid #3a3a3a; border-radius: 4px; overflow: hidden; }
.idblock .drop { border: 0; height: 22px; width: 36px; border-radius: 0; }
.idblock input { width: 143px; padding-left: 8px; background: #1d1d1d; }
.idblock .new { width: 24px; background: #545454; padding: 0 2px; }
.idblock .del { width: 24px; background: #3a3a3a; color: #777; padding: 0 5px; }

/* screen layout */
.screen { display: flex; gap: 4px; padding: 0 1px 2px; min-height: 0; }
.left, .right { display: flex; flex-direction: column; gap: 3px; min-height: 0; }
.left { flex: 1; min-width: 0; }
.right { width: 331px; flex: none; }
.editor { display: flex; flex-direction: column; border-radius: 6px; overflow: hidden; min-height: 0; }
.hdr { display: flex; align-items: center; height: 30px; flex: none; background: #393939; }

/* 3D viewport */
.view3d { flex: 419 1 0; }
.toolhdr { display: grid; grid-template-columns: 1fr auto 1fr; padding: 0 7px 0 9px; }
.grp { display: flex; align-items: center; gap: 8px; }
.mid { padding-right: 24px; }
.end { justify-content: flex-end; }
.tool { width: 28px; height: 28px; margin: 0 9px 0 6px; }
.modes button { color: #c0c0c0; }
.global { width: 94px; }
.options { width: 78px; padding-left: 7px; }
.canvas { position: relative; flex: 1; min-height: 0; }
.scene { position: absolute; inset: 0; width: 100%; height: 100%; }
.over { position: absolute; inset: 0; display: flex; flex-direction: column; overflow: hidden; }
.ovhdr { display: flex; align-items: center; height: 31px; flex: none; padding: 0 7px 0 9px; gap: 7px; }
.mode { width: 133px; border-color: #333; }
.ovmenu { display: flex; gap: 3px; }
.ovmenu button { height: 23px; padding: 0 7px; background: #262626; border-radius: 4px; }
.ovright { display: flex; gap: 8px; margin-left: auto; }
.ovright .drop { border-color: #262626; background: #262626; }
.ovbody { display: flex; flex: 1; min-height: 0; }
.shelf { display: flex; flex-direction: column; gap: 6px; padding: 10px 0 0 9px; width: 61px; }
.tg { display: flex; flex-direction: column; border-radius: 5px; overflow: hidden; flex: none; }
.tg button { position: relative; display: flex; align-items: center; justify-content: center; height: 42px; width: 52px; padding-right: 6px; background: #303030; }
.tg button svg { width: 38px; height: 38px; }
.tg button .t30 { width: 30px; height: 30px; }
.tg .on { background: #5680c2; }
.tg .more::after { content: ""; position: absolute; right: 4px; bottom: 4px; width: 0; height: 0; border-left: 5px solid transparent; border-bottom: 5px solid #909090; }
.info { padding: 7px 0 0 32px; flex: 1; color: #fff; line-height: 24px; }
.npanel { width: 244px; background: rgba(53, 53, 53, .96); }
.npanel h2 { display: flex; align-items: center; height: 28px; padding: 0 13px 0 8px; background: #414141; color: #eee; font-size: 14px; }
.npanel .tri { margin-right: 6px; color: #ccc; }
.grip { margin-left: auto; width: 12px; height: 6px; background: radial-gradient(circle at 1px 1px, #999 1px, transparent 1px) 0 0 / 3px 3px; }
.nbody { padding: 9px 10px 0; }
.nbody p { line-height: 22px; padding-left: 3px; margin-bottom: 2px; }
.xyz { display: flex; margin-bottom: 3px; }
.fields { display: flex; flex-direction: column; gap: 1px; border-radius: 4px; overflow: hidden; }
.fields label { display: flex; align-items: center; height: 23px; padding: 0 17px 0 18px; background: #595959; }
.fields input { flex: 1; text-align: right; }
.green label { background: #487f2c; }
.xyz .fields { width: 171px; }
.locks { display: flex; flex-direction: column; gap: 6px; padding: 3px 0 0 24px; color: #9a9a9a; }
.locks svg { width: 18px; height: 18px; }
.euler { width: 224px; }
.nbody .scl { margin-top: 2px; }
.vtabs { display: flex; flex-direction: column; gap: 6px; padding: 7px 0 0; width: 22px; background: rgba(34, 34, 34, .92); }
.vtabs button { writing-mode: vertical-rl; transform: rotate(180deg); width: 21px; padding: 4px 0; text-align: center; white-space: nowrap; background: #2b2b2b; border: 1px solid #3a3a3a; border-right: 0; border-radius: 4px 0 0 4px; line-height: 19px; }
.vtabs .on { background: #545454; }

/* graph editor */
.graph { flex: 525 1 0; }
.ghdr { background: #2d2d2d; padding: 0 7px 0 8px; }
.gd { width: 38px; background: #2a2a2a; }
.gmenu { display: flex; gap: 17px; padding: 0 17px 0 14px; }
.norm .nb { width: 109px; gap: 7px; justify-content: flex-start; padding-left: 5px; color: #dedede; }
.norm .rf { width: 23px; background: #3f5a86; }
.gright { display: flex; align-items: center; gap: 7px; margin-left: auto; }
.gright .seg > .lit { width: 23px; }
.nearest { width: 144px; }
.gbody { display: flex; flex: 1; min-height: 0; background: #282828; }
.channels { width: 255px; flex: none; padding: 2px 0 0; }
.find { display: flex; align-items: center; background: #1d1d1d; border: 1px solid #3a3a3a; border-radius: 4px; height: 25px; padding-left: 4px; color: #dedede; }
.find input { flex: 1; }
.channels .find { margin: 0 2px 3px 1px; }
.chans { display: grid; grid-auto-rows: 1fr; gap: 2px; height: 193px; color: #f3a42c; }
.chans li { display: flex; align-items: center; min-height: 0; overflow: hidden; padding-right: 12px; gap: 2px; }
.chans .ic { width: 18px; height: 18px; color: #fff; }
.chans .grey { color: #b4b4b4; }
.chans .tri { color: #fff; width: 14px; height: 14px; margin-right: 3px; }
.chans span { flex: 1; min-width: 0; white-space: nowrap; margin-left: 2px; }
.chans .obj { background: #0f2a4a; padding-left: 2px; gap: 3px; }
.chans .obj .tri { margin-right: 0; }
.chans .obj span { margin-left: 0; }
.chans .act { margin-left: 7px; background: #163d66; padding-left: 3px; }
.chans .plain { color: #b0b0b0; }
.chans .grpc { margin-left: 15px; background: #1a3314; padding-left: 3px; border-radius: 6px 0 0 0; }
.chans .grpc span { margin-left: 1px; }
.chans .fc { margin-left: 23px; background: #343434; border-left: 7px solid; padding-left: 5px; }
.chans .fc span { color: #f3a42c; }
.chans .r { margin: 0 4px 0 0; z-index: 1; }
.chans .red { border-color: #ff3352; }
.chans .grn { border-color: #8bdc00; }
.chans .blu { border-color: #2890ff; }
.chans input, .ck input { position: relative; flex: none; width: 13px; height: 13px; background: #aaa; border-radius: 2px; margin-right: 4px; }
.chans input::after, .ck input::after { content: ""; position: absolute; left: 4px; top: 1px; width: 4px; height: 7px; border: solid #303030; border-width: 0 2px 2px 0; transform: rotate(42deg); }
.lk { width: 18px; height: 18px; color: #999; }
.plot { flex: 1; min-width: 0; height: 100%; }
.axis text { font: 13px "DejaVu Sans", sans-serif; fill: #a0a0a0; text-anchor: middle; }
.axis .cur { fill: #fff; }

/* outliner */
.outliner { flex: 306 1 0; background: #282828; }
.ohdr { padding-left: 10px; gap: 8px; }
.ohdr .find { width: 138px; margin-left: 12px; height: 24px; flex: none; }
.ohdr .drop { flex: none; }
.ohdr .flt { margin-left: 12px; }
.newcol { width: 24px; height: 23px; background: #545454; border-radius: 4px; flex: none; padding: 2px; }
.tree { flex: 1; padding-top: 1px; color: #c8c8c8; background: repeating-linear-gradient(#282828 0 24px, #2c2c2c 24px 48px) 0 1px; }
.tree li { position: relative; display: flex; align-items: center; height: 24px; padding-right: 10px; }
.tree .root { padding-left: 26px; gap: 6px; }
.tree i { width: 24px; height: 24px; display: flex; align-items: center; justify-content: center; border-radius: 5px; flex: none; margin-right: 4px; }
.tree .pad { background: #464646; height: 23px; }
.tree .col { padding-left: 30px; }
.tree .cb { width: 14px; height: 14px; margin: 0 5px 0 11px; color: #ddd; }
.tree .ob { padding-left: 54px; }
.tree .ob .tri { margin-right: 6px; color: #aaa; z-index: 1; }
.tree .ob::before { content: ""; position: absolute; left: 60px; top: -12px; width: 14px; height: 24px; border: solid #7a7a7a; border-width: 0 0 1px 1px; }
.tree .d1 { margin-left: 23px; }
.tree .active { background: #3b5689; color: #f5a83a; }
.tree .active .pad { background: #6a7fa8; z-index: 1; }
.acts { display: flex; gap: 4px; margin-left: auto; color: #e0e0e0; align-items: center; }
.acts b { width: 2px; height: 5px; border: solid #19b98b; border-width: 1px 0 1px 1px; margin: -12px 0 0; }
.acts .dimi { color: #8f8f8f; }

/* properties */
.props { flex: 638 1 0; background: #424242; }
.phdr { padding: 0 10px; }
.phdr .gd { margin-right: 15px; }
.phdr .oi { margin-right: 8px; color: #eee; }
.phdr .pinr { margin-left: auto; color: #aaa; }
.pbody { display: flex; flex: 1; min-height: 0; }
.ptabs { display: flex; flex-direction: column; gap: 2px; width: 34px; flex: none; padding: 10px 0 0 3px; background: #232323; color: #c4c4c4; }
.ptabs button { height: 31px; flex: none; padding: 6px; background: #2b2b2b; border-radius: 5px 0 0 5px; }
.ptabs .or { color: #d08a52; }
.ptabs .bl { color: #7ba4e8; }
.ptabs .gr { color: #19b98b; }
.ptabs .pk { color: #cf6670; }
.ptabs .first { margin-top: 9px; }
.ptabs .on { background: #424242; }
.ptabs svg { width: 19px; height: 19px; }
.pcont { flex: 1; min-width: 0; padding: 10px 9px 0 10px; }
.add { width: 100%; height: 23px; }
.add select, .euler select { padding-left: 4px; }
.mod { margin-top: 7px; background: #353535; border-radius: 5px; padding-bottom: 16px; }
.mhead { display: flex; align-items: center; height: 35px; padding: 0 7px; border-bottom: 1px solid #2b2b2b; }
.mhead .tri { margin-right: 15px; color: #fff; }
.mhead input { width: 33px; height: 23px; margin: 0 10px 0 4px; background: #1d1d1d; border-radius: 4px; text-align: center; }
.mseg { flex: none; }
.mseg > button { width: 20px; }
.mseg > .w { width: 25px; }
.ud { margin-left: 11px; flex: none; }
.ud > button { width: 20px; }
.ud .ic { width: 16px; height: 16px; }
.mx { margin-left: auto; }
.mbody { padding: 7px 6px 0; }
.two { display: grid; grid-template-columns: 1fr 1fr; gap: 11px; }
.two > * { min-width: 0; }
.pb { height: 22px; background: #595959; border-radius: 4px; }
.alg { margin: 11px 0 3px; height: 22px; }
.alg > button { flex: 1; height: 22px; background: #595959; color: #e6e6e6; }
.opts p { line-height: 22px; padding-left: 3px; margin-bottom: 5px; }
.q { margin-top: 4px; }
.uv { width: 100%; margin-bottom: 2px; }
.uv select { padding-left: 3px; }
.ck { display: flex; align-items: center; height: 26px; padding-left: 4px; white-space: nowrap; }
.ck input { width: 14px; height: 14px; background: #4f76b3; margin-right: 10px; }
.ck input::after { border-color: #fff; left: 5px; }

/* status bar */
.status { display: flex; align-items: center; padding: 0 41px 0 10px; background: #303030; color: #a8a8a8; }
.status span { display: flex; align-items: center; gap: 9px; }
.status svg { width: 20px; height: 20px; }
.status .wd { width: 24px; }
.status .s1 { width: 310px; }
.status .s2 { width: 151px; }
.status .stats { margin-left: auto; }
```
